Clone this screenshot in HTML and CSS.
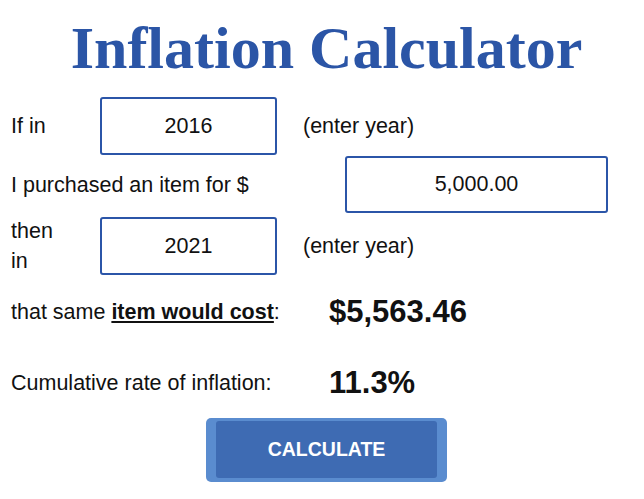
FILE: index.html
```html
<!DOCTYPE html>
<html lang="en">
<head>
    <meta charset="UTF-8">
    <meta name="viewport" content="width=device-width, initial-scale=1.0">
    <title>Inflation Calculator</title>
    <link rel="stylesheet" href="styles.css">
</head>
<body>
    <div class="container">
        <h1>Inflation Calculator</h1>

        <div class="row row-first">
            <span class="label">If in</span>
            <input type="text" class="field year" value="2016">
            <span class="note">(enter year)</span>
        </div>

        <div class="row row-amount">
            <span class="label label-wide">I purchased an item for $</span>
            <input type="text" class="field amount" value="5,000.00">
        </div>

        <div class="row row-then">
            <span class="label">then<br>in</span>
            <input type="text" class="field year" value="2021">
            <span class="note">(enter year)</span>
        </div>

        <div class="result result-cost">
            <span class="result-label">that same <u><b>item would cost</b></u>:</span>
            <span class="result-value">$5,563.46</span>
        </div>

        <div class="result result-rate">
            <span class="result-label">Cumulative rate of inflation:</span>
            <span class="result-value">11.3%</span>
        </div>

        <div class="actions">
            <button type="button" class="calc-btn"><span>CALCULATE</span></button>
        </div>
    </div>
</body>
</html>
```

FILE: styles.css
```css
/* Basic styling */
body {
    margin: 0;
    background: white;
    font-family: "Liberation Sans", Arial, sans-serif;
    color: #111;
}

.container {
    padding: 0 2px 0 11px;
}

h1 {
    margin: 18px 0 19px;
    font-family: "Liberation Serif", "Times New Roman", serif;
    font-size: 60px;
    line-height: 60px;
    font-weight: bold;
    color: #2b55a6;
    text-align: center;
}

.row {
    display: flex;
    align-items: center;
    font-size: 21.5px;
    line-height: 30px;
}

.row-amount {
    margin-top: 1px;
}

.row-then {
    margin-top: 3px;
}

.label {
    width: 89px;
}

.label-wide {
    width: auto;
}

.field {
    box-sizing: border-box;
    height: 58px;
    border: 2px solid #2b55a8;
    border-radius: 3px;
    font-family: inherit;
    font-size: 21.5px;
    color: #111;
    text-align: center;
    padding: 0;
    background: white;
}

.year {
    width: 177px;
}

.amount {
    width: 263px;
    height: 57px;
    margin-left: auto;
    margin-right: 34px;
}

.note {
    margin-left: 26px;
}

.result {
    display: flex;
    align-items: center;
    line-height: 40px;
}

.result-cost {
    margin-top: 16px;
}

.result-rate {
    margin-top: 31px;
}

.result-label {
    width: 318px;
    font-size: 21.5px;
}

.result-value {
    font-size: 31px;
    font-weight: bold;
}

.actions {
    display: flex;
    justify-content: center;
    margin-top: 15px;
}

.calc-btn {
    display: flex;
    box-sizing: border-box;
    width: 241px;
    height: 64px;
    padding: 3px 10px 4px;
    border: none;
    border-radius: 5px;
    background-color: #5a8ccf;
    cursor: pointer;
}

.calc-btn span {
    flex: 1;
    display: flex;
    align-items: center;
    justify-content: center;
    border-radius: 3px;
    background-color: #3e6bb3;
    color: white;
    font-family: "Liberation Sans", Arial, sans-serif;
    font-size: 19.5px;
    font-weight: bold;
}
```
